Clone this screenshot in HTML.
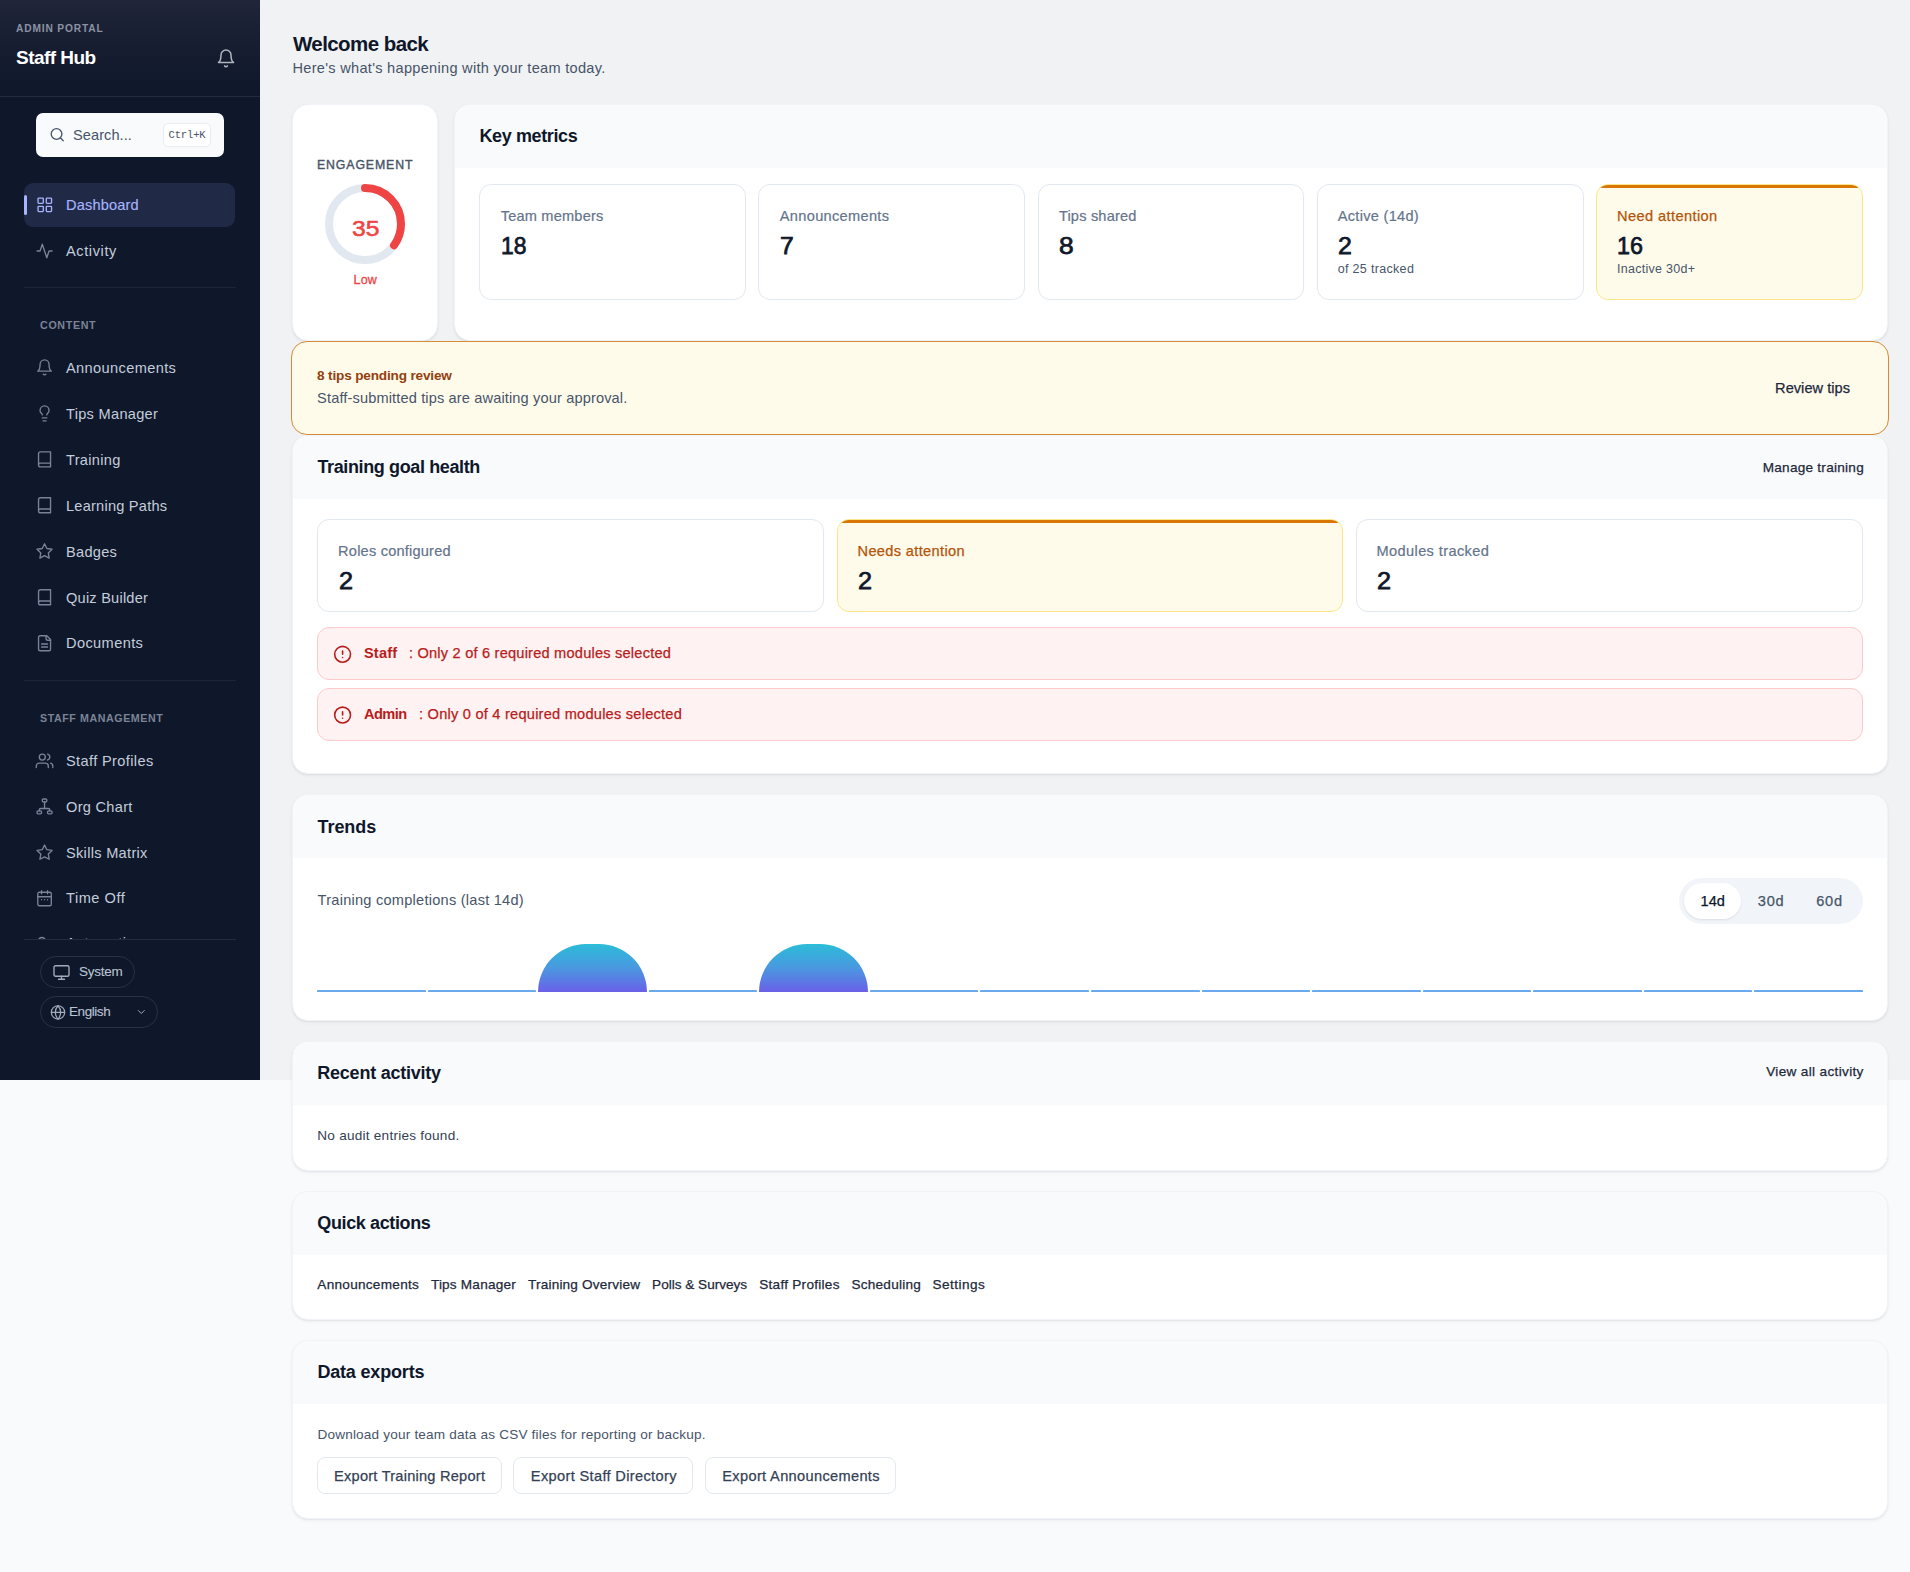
<!DOCTYPE html>
<html lang="en"><head><meta charset="utf-8"><title>Staff Hub – Admin Portal</title>
<style>
*{box-sizing:border-box;margin:0;padding:0}
html,body{width:1910px;height:1572px;overflow:hidden}
body{position:relative;background:#f8fafc;font-family:"Liberation Sans",sans-serif;-webkit-font-smoothing:antialiased}
.t{position:absolute;white-space:nowrap;line-height:1;display:block;font-weight:400;text-decoration:none;font-style:normal}
button.t{background:none;border:0;padding:0;font-family:inherit;cursor:pointer}
kbd.t{font-family:'Liberation Mono',monospace}
.b{position:absolute;display:block}
.card{position:absolute;border-radius:16px;background:#fff;overflow:hidden;border:1px solid #f0f3f7;box-shadow:0 1px 2px rgba(15,23,42,.07),0 2px 4px rgba(15,23,42,.03)}
.card .hd{position:absolute;left:0;top:0;right:0;height:63px;background:#f8fafc}
.tile{position:absolute;border:1px solid #e2e8f0;border-radius:12px;background:#fff}
.tile.warn{background:#fffbeb;border-color:#fde68a;overflow:hidden}
.tile.warn:before{content:"";position:absolute;left:0;right:0;top:0;height:3px;background:#d97706}
.err{position:absolute;left:317px;width:1546px;border:1px solid #fecaca;background:#fef2f2;border-radius:12px}
svg.i{position:absolute;fill:none;stroke-linecap:round;stroke-linejoin:round;overflow:visible}
.btn{position:absolute;border:1px solid #e2e8f0;border-radius:8px;background:#fff;height:37px;top:1457px}
</style></head><body>
<div class="b" style="left:0;top:0;width:1910px;height:1080px;background:#f1f2f4"></div>
<aside>
<div class="b" style="left:0;top:0;width:260px;height:1080px;background:#0f172a"></div>
<div class="b" style="left:0;top:0;width:260px;height:97px;background:linear-gradient(180deg,#20253a 0%,#161d30 50%,#0f172a 100%);border-bottom:1px solid #232b3f"></div>
<svg class="i" style="left:216px;top:48px;" width="20" height="20" viewBox="0.000 -0.360 24 24" stroke="#b1b5bd" stroke-width="1.8"><path d="M6 8a6 6 0 0 1 12 0c0 7 3 9 3 9H3s3-2 3-9"/><path d="M10.3 21a1.94 1.94 0 0 0 3.4 0"/></svg>
<div class="b" style="left:36px;top:113px;width:188px;height:44px;background:#f8fafc;border-radius:7px"></div>
<svg class="i" style="left:49px;top:126px;" width="16" height="16" viewBox="-0.300 -1.050 24 24" stroke="#475569" stroke-width="2"><circle cx="11" cy="11" r="8"/><path d="m21 21-4.3-4.3"/></svg>
<div class="b" style="left:163px;top:123px;width:47.5px;height:24px;background:#fff;border:1px solid #e8edf3;border-radius:5px"></div>
<div class="b" style="left:24px;top:183px;width:211px;height:44px;background:#202945;border-radius:9px"></div>
<div class="b" style="left:24px;top:195px;width:3px;height:20px;background:#a5b4fc;border-radius:2px"></div>
<svg class="i" style="left:35px;top:195px;" width="18" height="18" viewBox="-1.067 -1.067 24 24" stroke="#a5b4fc" stroke-width="1.8"><rect width="7" height="7" x="3" y="3" rx="1"/><rect width="7" height="7" x="14" y="3" rx="1"/><rect width="7" height="7" x="14" y="14" rx="1"/><rect width="7" height="7" x="3" y="14" rx="1"/></svg>
<svg class="i" style="left:35px;top:242px;" width="18" height="18" viewBox="-0.733 -0.000 24 24" stroke="#79839a" stroke-width="1.8"><path d="M22 12h-4l-3 9L9 3l-3 9H2"/></svg>
<div class="b" style="left:24px;top:287px;width:212px;height:1px;background:#1c2539"></div>
<svg class="i" style="left:35px;top:358px;" width="18" height="18" viewBox="-0.733 -0.533 24 24" stroke="#79839a" stroke-width="1.8"><path d="M6 8a6 6 0 0 1 12 0c0 7 3 9 3 9H3s3-2 3-9"/><path d="M10.3 21a1.94 1.94 0 0 0 3.4 0"/></svg>
<svg class="i" style="left:35px;top:404px;" width="18" height="18" viewBox="-0.733 -0.533 24 24" stroke="#79839a" stroke-width="1.8"><path d="M15 14c.2-1 .7-1.700 1.500-2.500 1-.9 1.500-2.200 1.500-3.500A6 6 0 0 0 6 8c0 1 .2 2.200 1.500 3.500.7.700 1.300 1.500 1.500 2.500"/><path d="M9 18h6"/><path d="M10 22h4"/></svg>
<svg class="i" style="left:35px;top:450px;" width="18" height="18" viewBox="-0.733 -0.533 24 24" stroke="#79839a" stroke-width="1.8"><path d="M4 19.500v-15A2.500 2.500 0 0 1 6.500 2H20v20H6.500a2.500 2.500 0 0 1 0-5H20"/></svg>
<svg class="i" style="left:35px;top:496px;" width="18" height="18" viewBox="-0.733 -0.400 24 24" stroke="#79839a" stroke-width="1.8"><path d="M4 19.500v-15A2.500 2.500 0 0 1 6.500 2H20v20H6.500a2.500 2.500 0 0 1 0-5H20"/></svg>
<svg class="i" style="left:35px;top:542px;" width="18" height="18" viewBox="-0.733 -0.400 24 24" stroke="#79839a" stroke-width="1.8"><polygon points="12 2 15.090 8.260 22 9.270 17 14.140 18.180 21.020 12 17.770 5.820 21.020 7 14.140 2 9.270 8.910 8.260 12 2"/></svg>
<svg class="i" style="left:35px;top:588px;" width="18" height="18" viewBox="-0.733 -0.400 24 24" stroke="#79839a" stroke-width="1.8"><path d="M4 19.500v-15A2.500 2.500 0 0 1 6.500 2H20v20H6.500a2.500 2.500 0 0 1 0-5H20"/></svg>
<svg class="i" style="left:35px;top:634px;" width="18" height="18" viewBox="-0.733 -0.400 24 24" stroke="#79839a" stroke-width="1.8"><path d="M15 2H6a2 2 0 0 0-2 2v16a2 2 0 0 0 2 2h12a2 2 0 0 0 2-2V7Z"/><path d="M14 2v4a2 2 0 0 0 2 2h4"/><path d="M16 13H8"/><path d="M16 17H8"/></svg>
<div class="b" style="left:24px;top:680px;width:212px;height:1px;background:#1c2539"></div>
<svg class="i" style="left:35px;top:751px;" width="18" height="18" viewBox="-0.733 -1.067 24 24" stroke="#79839a" stroke-width="1.8"><path d="M17 21v-2a4 4 0 0 0-4-4H5a4 4 0 0 0-4 4v2"/><circle cx="9" cy="7" r="4"/><path d="M23 21v-2a4 4 0 0 0-3-3.870"/><path d="M16 3.130a4 4 0 0 1 0 7.750"/></svg>
<svg class="i" style="left:35px;top:797px;" width="18" height="18" viewBox="-0.733 -0.933 24 24" stroke="#79839a" stroke-width="1.8"><rect x="16" y="17.600" width="6" height="4" rx="1.500"/><rect x="2" y="17.600" width="6" height="4" rx="1.500"/><rect x="9" y="1.700" width="6" height="4" rx="1.500"/><path d="M5 17.600v-1.200a2 2 0 0 1 2-2h10a2 2 0 0 1 2 2v1.200"/><path d="M12 14.400V5.700"/></svg>
<svg class="i" style="left:35px;top:843px;" width="18" height="18" viewBox="-0.733 -0.667 24 24" stroke="#79839a" stroke-width="1.8"><polygon points="12 2 15.090 8.260 22 9.270 17 14.140 18.180 21.020 12 17.770 5.820 21.020 7 14.140 2 9.270 8.910 8.260 12 2"/></svg>
<svg class="i" style="left:35px;top:889px;" width="18" height="18" viewBox="-0.733 -0.400 24 24" stroke="#79839a" stroke-width="1.8"><path d="M8 2v4"/><path d="M16 2v4"/><rect width="18" height="18" x="3" y="4" rx="2"/><path d="M3 10h18"/><path d="M8 14h.010"/><path d="M12 14h.010"/><path d="M16 14h.010"/></svg>
<svg class="i" style="left:35px;top:935px;" width="18" height="18" viewBox="-0.733 -0.267 24 24" stroke="#79839a" stroke-width="1.8"><path d="M16 21v-2a4 4 0 0 0-4-4H5a4 4 0 0 0-4 4v2"/><circle cx="8.500" cy="7" r="4"/><path d="M20 8v6"/><path d="M23 11h-6"/></svg>
<div class="b" style="left:0;top:939px;width:260px;height:141px;background:#0f172a;z-index:3"></div>
<div class="b" style="left:24px;top:939px;width:212px;height:1px;background:#232b3f;z-index:4"></div>
<div class="b" style="left:40px;top:956px;width:95px;height:32px;border:1px solid #283145;border-radius:16px;z-index:4"></div>
<svg class="i" style="left:52px;top:963px;z-index:5;" width="18" height="18" viewBox="-0.667 -0.667 24 24" stroke="#a3abba" stroke-width="1.8"><rect width="20" height="14" x="2" y="3" rx="2"/><path d="M8 21h8"/><path d="M12 17v4"/></svg>
<div class="b" style="left:40px;top:996px;width:117.5px;height:32px;border:1px solid #283145;border-radius:16px;z-index:4"></div>
<svg class="i" style="left:50px;top:1004px;z-index:5;" width="16" height="16" viewBox="0.000 -0.600 24 24" stroke="#a3abba" stroke-width="1.8"><circle cx="12" cy="12" r="10"/><path d="M12 2a14.500 14.500 0 0 0 0 20 14.500 14.500 0 0 0 0-20"/><path d="M2 12h20"/></svg>
<svg class="i" style="left:135px;top:1006px;z-index:5;" width="12" height="12" viewBox="-0.600 0.000 24 24" stroke="#a3abba" stroke-width="2"><path d="m6 9 6 6 6-6"/></svg>
<span class="t" style="left:16.00px;top:24px;font-size:10.2px;color:#8b92a3;font-weight:700;letter-spacing:0.843px;">ADMIN PORTAL</span>
<span class="t" style="left:16.00px;top:48px;font-size:19px;color:#ffffff;font-weight:700;letter-spacing:-0.537px;">Staff Hub</span>
<span class="t" style="left:73.00px;top:128px;font-size:14.6px;color:#475569;letter-spacing:0.059px;">Search...</span>
<kbd class="t" style="left:168.50px;top:130px;font-size:10.5px;color:#475569;letter-spacing:-0.136px;font-family:'Liberation Mono',monospace;">Ctrl+K</kbd>
<a class="t" style="left:66.00px;top:198px;font-size:14.6px;color:#a5b4fc;-webkit-text-stroke:0.15px;letter-spacing:0.161px;">Dashboard</a>
<a class="t" style="left:66.00px;top:244px;font-size:14.6px;color:#c3cddb;letter-spacing:0.594px;">Activity</a>
<span class="t" style="left:40.00px;top:320px;font-size:10.7px;color:#7b8496;font-weight:700;letter-spacing:0.664px;">CONTENT</span>
<a class="t" style="left:66.00px;top:361px;font-size:14.6px;color:#c3cddb;letter-spacing:0.366px;">Announcements</a>
<a class="t" style="left:66.00px;top:407px;font-size:14.6px;color:#c3cddb;letter-spacing:0.290px;">Tips Manager</a>
<a class="t" style="left:66.00px;top:453px;font-size:14.6px;color:#c3cddb;letter-spacing:0.313px;">Training</a>
<a class="t" style="left:66.00px;top:499px;font-size:14.6px;color:#c3cddb;letter-spacing:0.222px;">Learning Paths</a>
<a class="t" style="left:66.00px;top:545px;font-size:14.6px;color:#c3cddb;letter-spacing:0.275px;">Badges</a>
<a class="t" style="left:66.00px;top:591px;font-size:14.6px;color:#c3cddb;letter-spacing:0.216px;">Quiz Builder</a>
<a class="t" style="left:66.00px;top:636px;font-size:14.6px;color:#c3cddb;letter-spacing:0.383px;">Documents</a>
<span class="t" style="left:40.00px;top:713px;font-size:10.7px;color:#7b8496;font-weight:700;letter-spacing:0.563px;">STAFF MANAGEMENT</span>
<a class="t" style="left:66.00px;top:754px;font-size:14.6px;color:#c3cddb;letter-spacing:0.362px;">Staff Profiles</a>
<a class="t" style="left:66.00px;top:800px;font-size:14.6px;color:#c3cddb;letter-spacing:0.287px;">Org Chart</a>
<a class="t" style="left:66.00px;top:846px;font-size:14.6px;color:#c3cddb;letter-spacing:0.294px;">Skills Matrix</a>
<a class="t" style="left:66.00px;top:891px;font-size:14.6px;color:#c3cddb;letter-spacing:0.534px;">Time Off</a>
<a class="t" style="left:66.00px;top:936px;font-size:14.6px;color:#c3cddb;letter-spacing:0.339px;">Automation</a>
<button class="t" style="left:79.00px;top:965px;font-size:13.5px;color:#b9c4d3;-webkit-text-stroke:0.1px;letter-spacing:-0.265px;z-index:5;">System</button>
<span class="t" style="left:69.00px;top:1005px;font-size:13.5px;color:#b9c4d3;-webkit-text-stroke:0.1px;letter-spacing:-0.432px;z-index:5;">English</span>
</aside>
<main>
<div class="card" style="left:292px;top:104px;width:145.6px;height:237px;"></div>
<div class="card" style="left:454px;top:104px;width:1433.75px;height:237px;"><div class="hd"></div></div>
<div class="b" style="left:291px;top:341px;width:1598px;height:94px;background:#fffbeb;border:1px solid #d98a35;border-radius:16px"></div>
<div class="card" style="left:292px;top:435px;width:1595.75px;height:339px;"><div class="hd"></div></div>
<div class="card" style="left:292px;top:794px;width:1595.75px;height:227px;"><div class="hd"></div></div>
<div class="card" style="left:292px;top:1041px;width:1595.75px;height:130px;"><div class="hd"></div></div>
<div class="card" style="left:292px;top:1191px;width:1595.75px;height:129px;"><div class="hd"></div></div>
<div class="card" style="left:292px;top:1340px;width:1595.75px;height:179px;"><div class="hd"></div></div>
<svg class="b" style="left:325px;top:184px" width="80" height="80" viewBox="0 0 80 80"><circle cx="40" cy="40" r="36" fill="none" stroke="#e2e8f0" stroke-width="8"/><circle cx="40" cy="40" r="36" fill="none" stroke="#ef4444" stroke-width="8" stroke-linecap="round" stroke-dasharray="79.17 226.19" transform="rotate(-90 40 40)"/></svg>
<div class="tile" style="left:479.0px;top:184.3px;width:266.56px;height:115.4px"></div>
<div class="tile" style="left:758.36px;top:184.3px;width:266.56px;height:115.4px"></div>
<div class="tile" style="left:1037.72px;top:184.3px;width:266.56px;height:115.4px"></div>
<div class="tile" style="left:1317.08px;top:184.3px;width:266.56px;height:115.4px"></div>
<div class="tile warn" style="left:1596.44px;top:184.3px;width:266.56px;height:115.4px"></div>
<div class="tile" style="left:317px;top:519px;width:506.8px;height:93px"></div>
<div class="tile warn" style="left:836.6px;top:519px;width:506.8px;height:93px"></div>
<div class="tile" style="left:1356.2px;top:519px;width:506.8px;height:93px"></div>
<div class="err" style="top:627px;height:53px"></div>
<div class="err" style="top:688px;height:53px"></div>
<svg class="i" style="left:333px;top:644px;" width="19" height="19" viewBox="-0.126 -1.011 24 24" stroke="#b91c1c" stroke-width="2"><circle cx="12" cy="12" r="10"/><path d="M12 8v4"/><path d="M12 16h.010"/></svg>
<svg class="i" style="left:333px;top:705px;" width="19" height="19" viewBox="-0.126 -0.632 24 24" stroke="#b91c1c" stroke-width="2"><circle cx="12" cy="12" r="10"/><path d="M12 8v4"/><path d="M12 16h.010"/></svg>
<div class="b" style="left:1679px;top:878px;width:184.3px;height:46px;background:#f1f5f9;border-radius:23px"></div>
<div class="b" style="left:1684px;top:883px;width:56.5px;height:36px;background:#fff;border-radius:18px;box-shadow:0 1px 2px rgba(15,23,42,.1)"></div>
<div class="b" style="left:317.00px;top:990px;width:108.57px;height:2px;background:#6aa9ed;border-radius:1px 1px 0 0"></div>
<div class="b" style="left:427.57px;top:990px;width:108.57px;height:2px;background:#6aa9ed;border-radius:1px 1px 0 0"></div>
<div class="b" style="left:538.14px;top:943.5px;width:108.57px;height:48.5px;border-radius:48px 48px 0 0;background:linear-gradient(180deg,#2bbdd8 0%,#4a98e0 50%,#6a60e8 100%)"></div>
<div class="b" style="left:648.71px;top:990px;width:108.57px;height:2px;background:#6aa9ed;border-radius:1px 1px 0 0"></div>
<div class="b" style="left:759.29px;top:943.5px;width:108.57px;height:48.5px;border-radius:48px 48px 0 0;background:linear-gradient(180deg,#2bbdd8 0%,#4a98e0 50%,#6a60e8 100%)"></div>
<div class="b" style="left:869.86px;top:990px;width:108.57px;height:2px;background:#6aa9ed;border-radius:1px 1px 0 0"></div>
<div class="b" style="left:980.43px;top:990px;width:108.57px;height:2px;background:#6aa9ed;border-radius:1px 1px 0 0"></div>
<div class="b" style="left:1091.00px;top:990px;width:108.57px;height:2px;background:#6aa9ed;border-radius:1px 1px 0 0"></div>
<div class="b" style="left:1201.57px;top:990px;width:108.57px;height:2px;background:#6aa9ed;border-radius:1px 1px 0 0"></div>
<div class="b" style="left:1312.14px;top:990px;width:108.57px;height:2px;background:#6aa9ed;border-radius:1px 1px 0 0"></div>
<div class="b" style="left:1422.71px;top:990px;width:108.57px;height:2px;background:#6aa9ed;border-radius:1px 1px 0 0"></div>
<div class="b" style="left:1533.29px;top:990px;width:108.57px;height:2px;background:#6aa9ed;border-radius:1px 1px 0 0"></div>
<div class="b" style="left:1643.86px;top:990px;width:108.57px;height:2px;background:#6aa9ed;border-radius:1px 1px 0 0"></div>
<div class="b" style="left:1754.43px;top:990px;width:108.57px;height:2px;background:#6aa9ed;border-radius:1px 1px 0 0"></div>
<div class="btn" style="left:317.4px;width:184.2px"></div>
<div class="btn" style="left:513.1px;width:179.9px"></div>
<div class="btn" style="left:705px;width:190.7px"></div>
<h1 class="t" style="left:292.90px;top:34px;font-size:20.5px;color:#0f172a;font-weight:700;letter-spacing:-0.567px;">Welcome back</h1>
<p class="t" style="left:292.50px;top:61px;font-size:14.6px;color:#475569;letter-spacing:0.277px;">Here's what's happening with your team today.</p>
<span class="t" style="left:317.00px;top:159px;font-size:12.3px;color:#475569;-webkit-text-stroke:0.38px;letter-spacing:0.890px;">ENGAGEMENT</span>
<span class="t" style="left:351.60px;top:217px;font-size:22.8px;color:#ef4444;-webkit-text-stroke:0.55px;transform:scaleX(1.0808);transform-origin:0 0;">35</span>
<span class="t" style="left:353.50px;top:274px;font-size:12.5px;color:#ef4444;-webkit-text-stroke:0.3px;letter-spacing:0.226px;">Low</span>
<h2 class="t" style="left:479.40px;top:127px;font-size:18px;color:#0f172a;font-weight:700;letter-spacing:-0.368px;">Key metrics</h2>
<span class="t" style="left:500.70px;top:209px;font-size:14.6px;color:#64748b;-webkit-text-stroke:0.2px;letter-spacing:0.189px;">Team members</span>
<span class="t" style="left:779.80px;top:209px;font-size:14.6px;color:#64748b;-webkit-text-stroke:0.2px;letter-spacing:0.313px;">Announcements</span>
<span class="t" style="left:1058.90px;top:209px;font-size:14.6px;color:#64748b;-webkit-text-stroke:0.2px;letter-spacing:0.182px;">Tips shared</span>
<span class="t" style="left:1337.70px;top:209px;font-size:14.6px;color:#64748b;-webkit-text-stroke:0.2px;letter-spacing:0.287px;">Active (14d)</span>
<span class="t" style="left:1617.00px;top:209px;font-size:14.6px;color:#b45309;-webkit-text-stroke:0.25px;letter-spacing:0.403px;">Need attention</span>
<span class="t" style="left:500.70px;top:234px;font-size:24.5px;color:#0f172a;-webkit-text-stroke:0.75px;transform:scaleX(0.9341);transform-origin:0 0;">18</span>
<span class="t" style="left:779.80px;top:234px;font-size:24.5px;color:#0f172a;-webkit-text-stroke:0.75px;transform:scaleX(1.0095);transform-origin:0 0;">7</span>
<span class="t" style="left:1058.90px;top:234px;font-size:24.5px;color:#0f172a;-webkit-text-stroke:0.75px;transform:scaleX(1.0755);transform-origin:0 0;">8</span>
<span class="t" style="left:1337.70px;top:234px;font-size:24.5px;color:#0f172a;-webkit-text-stroke:0.75px;transform:scaleX(1.0168);transform-origin:0 0;">2</span>
<span class="t" style="left:1617.00px;top:234px;font-size:24.5px;color:#0f172a;-webkit-text-stroke:0.75px;transform:scaleX(0.9525);transform-origin:0 0;">16</span>
<span class="t" style="left:1337.70px;top:263px;font-size:12.5px;color:#475569;letter-spacing:0.324px;">of 25 tracked</span>
<span class="t" style="left:1617.00px;top:263px;font-size:12.5px;color:#475569;letter-spacing:0.278px;">Inactive 30d+</span>
<span class="t" style="left:317.10px;top:369px;font-size:13.6px;color:#92400e;font-weight:700;letter-spacing:-0.171px;">8 tips pending review</span>
<p class="t" style="left:317.10px;top:391px;font-size:14.6px;color:#475569;letter-spacing:0.133px;">Staff-submitted tips are awaiting your approval.</p>
<a class="t" style="left:1775.10px;top:381px;font-size:14.6px;color:#1e293b;-webkit-text-stroke:0.25px;letter-spacing:0.025px;">Review tips</a>
<h2 class="t" style="left:317.50px;top:458px;font-size:18px;color:#0f172a;font-weight:700;letter-spacing:-0.381px;">Training goal health</h2>
<a class="t" style="left:1762.70px;top:461px;font-size:13.6px;color:#1e293b;-webkit-text-stroke:0.25px;letter-spacing:0.251px;">Manage training</a>
<span class="t" style="left:338.10px;top:544px;font-size:14.6px;color:#64748b;-webkit-text-stroke:0.2px;letter-spacing:0.200px;">Roles configured</span>
<span class="t" style="left:857.50px;top:544px;font-size:14.6px;color:#b45309;-webkit-text-stroke:0.25px;letter-spacing:0.346px;">Needs attention</span>
<span class="t" style="left:1376.50px;top:544px;font-size:14.6px;color:#64748b;-webkit-text-stroke:0.2px;letter-spacing:0.376px;">Modules tracked</span>
<span class="t" style="left:338.50px;top:569px;font-size:24.5px;color:#0f172a;-webkit-text-stroke:0.75px;transform:scaleX(1.0315);transform-origin:0 0;">2</span>
<span class="t" style="left:858.00px;top:569px;font-size:24.5px;color:#0f172a;-webkit-text-stroke:0.75px;transform:scaleX(1.0315);transform-origin:0 0;">2</span>
<span class="t" style="left:1377.00px;top:569px;font-size:24.5px;color:#0f172a;-webkit-text-stroke:0.75px;transform:scaleX(1.0315);transform-origin:0 0;">2</span>
<span class="t" style="left:363.90px;top:646px;font-size:14.6px;color:#b91c1c;font-weight:700;letter-spacing:0.210px;">Staff</span>
<span class="t" style="left:408.90px;top:646px;font-size:14.6px;color:#b91c1c;-webkit-text-stroke:0.25px;letter-spacing:0.212px;">: Only 2 of 6 required modules selected</span>
<span class="t" style="left:363.90px;top:707px;font-size:14.6px;color:#b91c1c;font-weight:700;letter-spacing:-0.508px;">Admin</span>
<span class="t" style="left:419.00px;top:707px;font-size:14.6px;color:#b91c1c;-webkit-text-stroke:0.25px;letter-spacing:0.233px;">: Only 0 of 4 required modules selected</span>
<h2 class="t" style="left:317.60px;top:818px;font-size:18px;color:#0f172a;font-weight:700;letter-spacing:-0.090px;">Trends</h2>
<p class="t" style="left:317.60px;top:893px;font-size:14.6px;color:#475569;letter-spacing:0.236px;">Training completions (last 14d)</p>
<button class="t" style="left:1700.60px;top:894px;font-size:14.6px;color:#0f172a;-webkit-text-stroke:0.25px;letter-spacing:-0.042px;">14d</button>
<button class="t" style="left:1757.80px;top:894px;font-size:14.6px;color:#475569;-webkit-text-stroke:0.25px;letter-spacing:0.758px;">30d</button>
<button class="t" style="left:1816.20px;top:894px;font-size:14.6px;color:#475569;-webkit-text-stroke:0.25px;letter-spacing:0.808px;">60d</button>
<h2 class="t" style="left:317.30px;top:1064px;font-size:18px;color:#0f172a;font-weight:700;letter-spacing:-0.234px;">Recent activity</h2>
<a class="t" style="left:1766.20px;top:1065px;font-size:13.6px;color:#1e293b;-webkit-text-stroke:0.25px;letter-spacing:0.331px;">View all activity</a>
<p class="t" style="left:317.30px;top:1129px;font-size:13.6px;color:#334155;letter-spacing:0.233px;">No audit entries found.</p>
<h2 class="t" style="left:317.30px;top:1214px;font-size:18px;color:#0f172a;font-weight:700;letter-spacing:-0.372px;">Quick actions</h2>
<a class="t" style="left:317.30px;top:1278px;font-size:13.6px;color:#1e293b;-webkit-text-stroke:0.25px;letter-spacing:0.272px;">Announcements</a>
<a class="t" style="left:430.90px;top:1278px;font-size:13.6px;color:#1e293b;-webkit-text-stroke:0.25px;letter-spacing:0.201px;">Tips Manager</a>
<a class="t" style="left:528.00px;top:1278px;font-size:13.6px;color:#1e293b;-webkit-text-stroke:0.25px;letter-spacing:0.186px;">Training Overview</a>
<a class="t" style="left:652.10px;top:1278px;font-size:13.6px;color:#1e293b;-webkit-text-stroke:0.25px;letter-spacing:-0.013px;">Polls &amp; Surveys</a>
<a class="t" style="left:759.20px;top:1278px;font-size:13.6px;color:#1e293b;-webkit-text-stroke:0.25px;letter-spacing:0.268px;">Staff Profiles</a>
<a class="t" style="left:851.50px;top:1278px;font-size:13.6px;color:#1e293b;-webkit-text-stroke:0.25px;letter-spacing:0.217px;">Scheduling</a>
<a class="t" style="left:932.60px;top:1278px;font-size:13.6px;color:#1e293b;-webkit-text-stroke:0.25px;letter-spacing:0.427px;">Settings</a>
<h2 class="t" style="left:317.40px;top:1363px;font-size:18px;color:#0f172a;font-weight:700;letter-spacing:-0.179px;">Data exports</h2>
<p class="t" style="left:317.40px;top:1428px;font-size:13.6px;color:#475569;letter-spacing:0.183px;">Download your team data as CSV files for reporting or backup.</p>
<button class="t" style="left:334.10px;top:1469px;font-size:14.6px;color:#334155;-webkit-text-stroke:0.25px;letter-spacing:0.231px;">Export Training Report</button>
<button class="t" style="left:530.80px;top:1469px;font-size:14.6px;color:#334155;-webkit-text-stroke:0.25px;letter-spacing:0.345px;">Export Staff Directory</button>
<button class="t" style="left:722.30px;top:1469px;font-size:14.6px;color:#334155;-webkit-text-stroke:0.25px;letter-spacing:0.335px;">Export Announcements</button>
</main>
</body></html>
